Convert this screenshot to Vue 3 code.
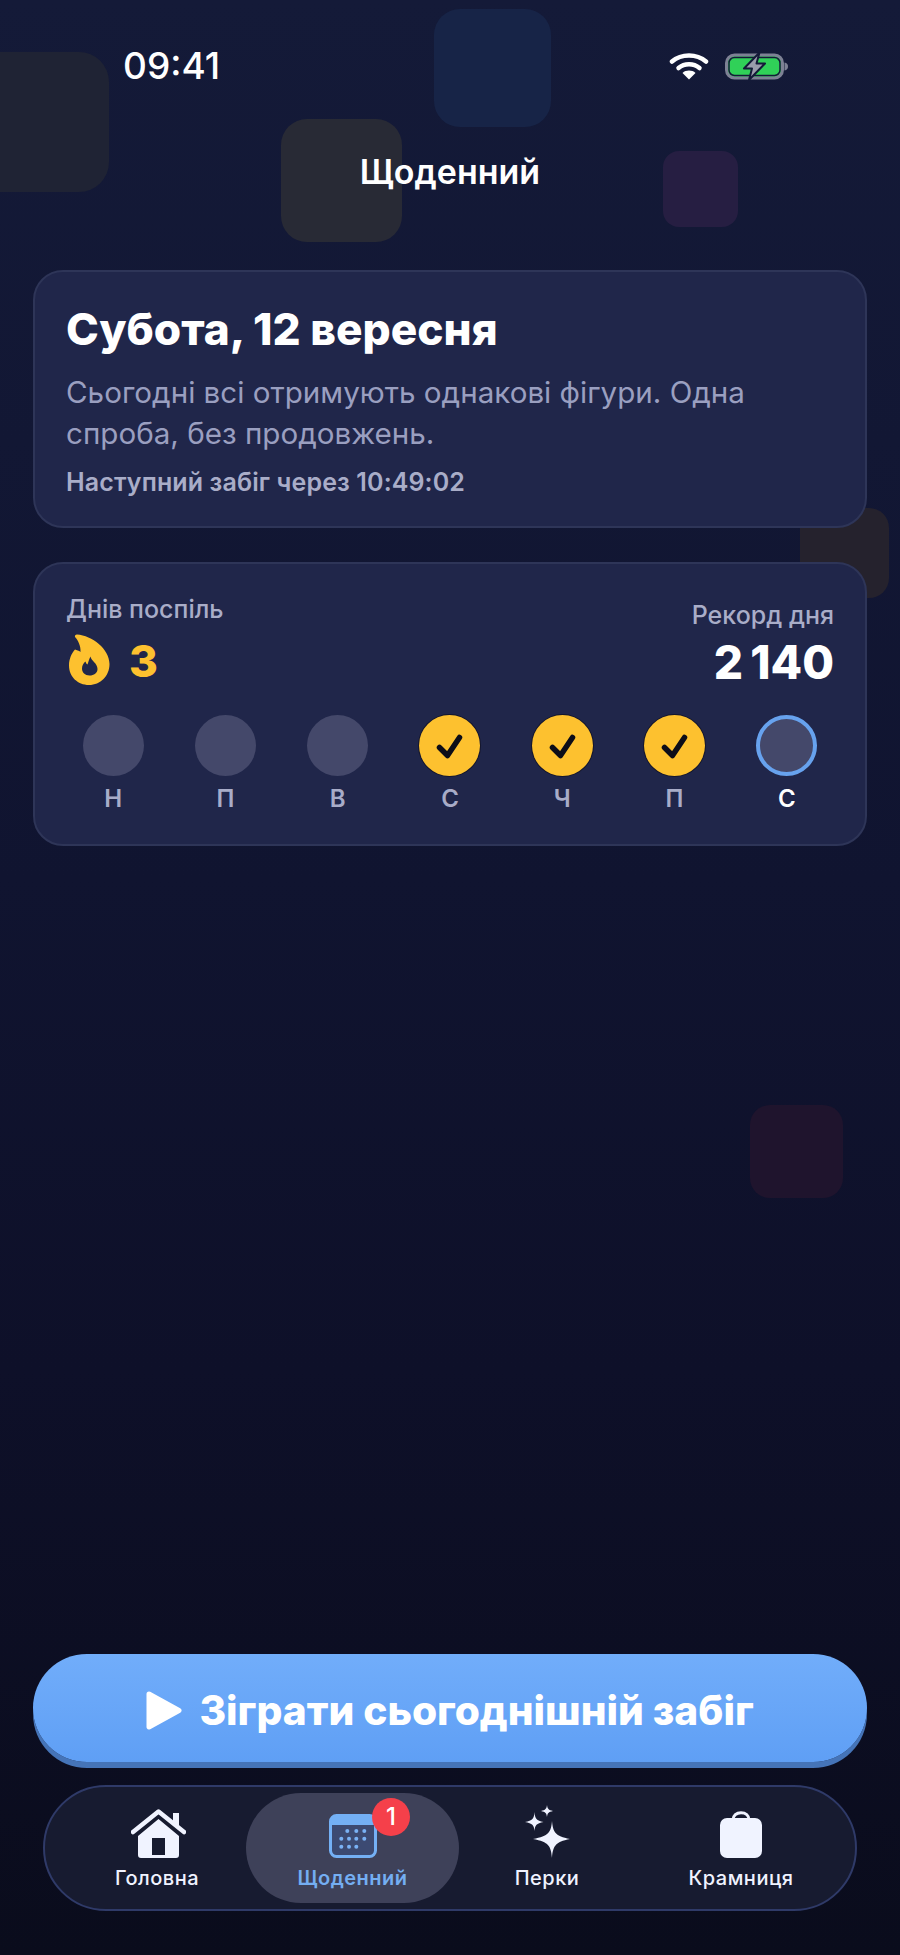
<template>
  <div class="screen">
    <!-- background shapes -->
    <div
      v-for="(b, i) in blocks"
      :key="i"
      class="block"
      :style="{ left: b.x + 'px', top: b.y + 'px', width: b.w + 'px', height: b.h + 'px', background: b.c, borderRadius: b.r + 'px' }"
    ></div>

    <div class="status">
      <span class="time">09:41</span>
      <div class="status-icons">
        <svg width="40" height="28" viewBox="0 0 40 28">
          <path d="M3 9.500C12.500 1.500 27.500 1.500 37 9.500" class="wifi" />
          <path d="M9.500 16C15.500 11 24.500 11 30.500 16" class="wifi" />
          <path d="M20 27.500L13.500 21C17 17.800 23 17.800 26.500 21Z" fill="#fff" />
        </svg>
        <svg width="63" height="28" viewBox="0 0 63 28">
          <rect x="1.500" y="3" width="56" height="23" rx="8" fill="#30d158" stroke="#7d8194" stroke-width="3" />
          <rect x="4" y="5.500" width="51" height="18" rx="5.500" fill="none" stroke="#141a38" stroke-width="1.500" />
          <path d="M59.500 10.500C62 11 63 12.500 63 14.500C63 16.500 62 18 59.500 18.500Z" fill="#7d8194" />
          <path d="M34.500 0.500L19 16.500H27L24 28L40 11.500H31.500Z" fill="#9a9dac" stroke="#141a38" stroke-width="2" stroke-linejoin="round" />
        </svg>
      </div>
    </div>

    <h1 class="title">Щоденний</h1>

    <section class="card intro">
      <h2>Субота, 12 вересня</h2>
      <p class="desc">Сьогодні всі отримують однакові фігури. Одна спроба, без продовжень.</p>
      <p class="next">Наступний забіг через 10:49:02</p>
    </section>

    <section class="card streak">
      <div class="streak-top">
        <div>
          <div class="label">Днів поспіль</div>
          <div class="count">
            <svg width="41" height="51" viewBox="0 0 41 51">
              <path d="M8 0.500C23 1.500 40.500 15 40.500 30C40.500 42 31.500 51 20 51C8.500 51 0 42.500 0 31.500C0 25 2.500 19.500 6 15.500C7.500 16 10 16.500 11.500 18C12 12 9 6 6 3C5.500 1.500 6.500 0.500 8 0.500Z" fill="#fdc12f" />
              <path d="M21.500 22.500C22 27 28.500 29 28.500 35C28.500 39 25 41.500 20.500 41.500C16 41.500 13 38.500 13 34.500C13 31.500 14.500 29 16.500 27.500C17 29 17.500 30 18.500 30.500C19.500 28 20 25 21.500 22.500Z" fill="#20264a" />
            </svg>
            <span>3</span>
          </div>
        </div>
        <div class="record">
          <div class="label">Рекорд дня</div>
          <div class="score">2 140</div>
        </div>
      </div>
      <div class="week">
        <div v-for="(d, i) in days" :key="i" class="day" :class="{ today: d.today }">
          <span class="dot" :class="{ done: d.done }">
            <svg v-if="d.done" width="61" height="61" viewBox="0 0 61 61">
              <path d="M20.500 32.500L28.500 40.500L40.500 22.500" fill="none" stroke="#0c0d18" stroke-width="5.500" stroke-linecap="round" stroke-linejoin="round" />
            </svg>
          </span>
          <span class="day-name">{{ d.name }}</span>
        </div>
      </div>
    </section>

    <div class="spacer"></div>

    <button class="play">
      <svg width="36" height="39" viewBox="0 0 36 39">
        <path d="M3 3L33 19.500L3 36Z" fill="#fff" stroke="#fff" stroke-width="5" stroke-linejoin="round" />
      </svg>
      <span>Зіграти сьогоднішній забіг</span>
    </button>

    <nav class="tabs">
      <div class="tab">
        <svg class="home" width="55" height="49" viewBox="0 0 55 49">
          <path d="M42 4H48V16H42Z" fill="#f0f3ff" />
          <path d="M2 23L27.500 2.500L53 23" fill="none" stroke="#f0f3ff" stroke-width="4.500" stroke-linecap="round" stroke-linejoin="round" />
          <path fill-rule="evenodd" d="M27.500 10L48 27V46C48 48 47 49 45 49H10C8 49 7 48 7 46V27ZM21 29V46H34V29Z" fill="#f0f3ff" />
        </svg>
        <span>Головна</span>
      </div>
      <div class="tab active">
        <svg class="cal" width="48" height="44" viewBox="0 0 48 44">
          <rect x="1.500" y="1.500" width="45" height="41" rx="6" fill="#3c4a72" stroke="#74b0f5" stroke-width="3" />
          <path d="M1.500 11V7.500C1.500 4 4 1.500 7.500 1.500H40.500C44 1.500 46.500 4 46.500 7.500V11Z" fill="#74b0f5" />
          <g fill="#7ab2f5">
            <circle v-for="(p, i) in calDots" :key="i" :cx="p[0]" :cy="p[1]" r="2" />
          </g>
        </svg>
        <span class="badge">1</span>
        <span>Щоденний</span>
      </div>
      <div class="tab">
        <svg width="46" height="53" viewBox="0 0 46 53">
          <path d="M28 16C29 27 31 31 46 34C31 37 29 41 28 53C27 41 25 37 9 34C25 31 27 27 28 16Z" fill="#f0f3ff" />
          <path d="M10.500 7C11 14 12.500 15.500 19.500 17C12.500 18.500 11 20 10.500 26C10 20 8.500 18.500 1 17C8.500 15.500 10 14 10.500 7Z" fill="#f0f3ff" />
          <path d="M23 0C23.500 3.800 24.500 5 29 6C24.500 7 23.500 8 23 12C22.500 8 21.500 7 17 6C21.500 5 22.500 3.800 23 0Z" fill="#f0f3ff" />
        </svg>
        <span>Перки</span>
      </div>
      <div class="tab">
        <svg width="42" height="47" viewBox="0 0 42 47">
          <path d="M13 9C13 4.500 16.500 1.800 21 1.800C25.500 1.800 29 4.500 29 9" fill="none" stroke="#f0f3ff" stroke-width="3" />
          <rect x="0" y="7" width="42" height="40" rx="7" fill="#f0f3ff" />
        </svg>
        <span>Крамниця</span>
      </div>
    </nav>
  </div>
</template>

<script setup>
const blocks = [
  { x: -30, y: 52, w: 139, h: 140, c: '#1f2334', r: 30 },
  { x: 434, y: 9, w: 117, h: 118, c: '#172447', r: 26 },
  { x: 281, y: 119, w: 121, h: 123, c: '#282a35', r: 26 },
  { x: 663, y: 151, w: 75, h: 76, c: '#261e42', r: 16 },
  { x: 800, y: 508, w: 89, h: 90, c: '#25222d', r: 20 },
  { x: 750, y: 1105, w: 93, h: 93, c: '#1f142d', r: 20 }
]

const days = [
  { name: 'Н' },
  { name: 'П' },
  { name: 'В' },
  { name: 'С', done: true },
  { name: 'Ч', done: true },
  { name: 'П', done: true },
  { name: 'С', today: true }
]

const calDots = [
  [18.3, 17], [27.3, 17], [35.3, 17],
  [12.3, 24.7], [20, 24.7], [27.3, 24.7], [35.3, 24.7],
  [12.3, 32.7], [20, 32.7], [27.3, 32.7]
]
</script>

<style>
body {
  background: #0b0d1e;
}
</style>

<style scoped>
.screen {
  position: relative;
  width: 900px;
  height: 1955px;
  overflow: hidden;
  display: flex;
  flex-direction: column;
  background: linear-gradient(180deg, #141a38 0%, #101430 45%, #0e1029 70%, #0a0c1c 100%);
  font-family: Inter, "Noto Sans", sans-serif;
  color: #fff;
}

.block {
  position: absolute;
}

.status,
.title,
.card,
.play,
.tabs {
  position: relative;
}

.status {
  display: flex;
  justify-content: space-between;
  align-items: center;
  height: 28px;
  margin-top: 52px;
  padding: 0 112px 0 123px;
}

.time {
  font-size: 37px;
  font-weight: 500;
  line-height: 28px;
}

.status-icons {
  display: flex;
  align-items: center;
  gap: 16px;
}

.wifi {
  fill: none;
  stroke: #fff;
  stroke-width: 4.5;
  stroke-linecap: round;
}

.title {
  margin: 70px 0 0;
  font-size: 34px;
  font-weight: 600;
  line-height: 44px;
  text-align: center;
}

.card {
  margin: 0 33px;
  padding: 0 31px;
  box-sizing: border-box;
  background: #20264a;
  border: 2px solid #2e3558;
  border-radius: 30px;
}

.intro {
  height: 258px;
  margin-top: 76px;
  padding-top: 29px;
}

.intro h2 {
  margin: 0;
  font-size: 44.2px;
  font-weight: 800;
  line-height: 56px;
}

.desc {
  margin: 15px 0 0;
  font-size: 29.6px;
  line-height: 41px;
  color: #9a9fc0;
}

.next {
  margin: 13px 0 0;
  font-size: 25px;
  font-weight: 600;
  line-height: 30px;
  letter-spacing: 0.12px;
  color: #a9adc8;
}

.streak {
  height: 284px;
  margin-top: 34px;
  padding-top: 30px;
}

.streak-top {
  display: flex;
  justify-content: space-between;
}

.label {
  font-size: 25px;
  font-weight: 500;
  line-height: 30px;
  color: #a9adc8;
}

.count {
  display: flex;
  align-items: center;
  gap: 19px;
  margin: 8.5px 0 0 3px;
  font-size: 44px;
  font-weight: 800;
  color: #fdc12f;
}

.count span {
  position: relative;
  top: 1px;
}

.record {
  padding-top: 6px;
  text-align: right;
}

.score {
  margin-top: 5px;
  font-size: 46px;
  font-weight: 800;
  line-height: 55px;
  word-spacing: -3px;
}

.week {
  display: grid;
  grid-template-columns: repeat(7, 1fr);
  margin: 24.5px -9px 0;
}

.day {
  display: flex;
  flex-direction: column;
  align-items: center;
}

.dot {
  width: 61px;
  height: 61px;
  box-sizing: border-box;
  border-radius: 50%;
  background: #44486a;
}

.dot.done {
  background: #fdc12f;
  box-shadow: 0 0 0 1px #14162c;
}

.today .dot {
  border: 4px solid #67a2ee;
}

.day-name {
  margin-top: 9px;
  font-size: 24px;
  font-weight: 600;
  line-height: 28px;
  color: #a8acc8;
}

.today .day-name {
  color: #fff;
}

.spacer {
  flex: 1;
}

.play {
  display: flex;
  align-items: center;
  justify-content: center;
  gap: 17px;
  box-sizing: border-box;
  height: 108px;
  margin: 0 33px;
  padding: 4px 0 0;
  border: none;
  border-radius: 54px;
  background: linear-gradient(180deg, #71adfa 0%, #5f9ff5 100%);
  box-shadow: 0 6px 0 #4574b8;
  font-family: inherit;
  font-size: 40.7px;
  font-weight: 800;
  color: #fff;
}

.tabs {
  display: grid;
  grid-template-columns: 178px 213px 176px 212px;
  align-items: stretch;
  box-sizing: border-box;
  height: 126px;
  margin: 23px 43px 44px;
  padding: 6px 0 6px 23px;
  background: #171b30;
  border: 2px solid #2f3a68;
  border-radius: 63px;
}

.tab {
  position: relative;
  display: flex;
  flex-direction: column;
  align-items: center;
  justify-content: flex-end;
  padding-bottom: 13px;
  font-size: 20px;
  font-weight: 500;
  line-height: 24px;
  letter-spacing: 0.5px;
  color: #f0f3ff;
}

.tab svg {
  margin-bottom: 8px;
}

.tab .home {
  margin-left: 3px;
}

.active {
  border-radius: 56px;
  background: #3e4159;
  font-weight: 600;
  color: #74aef2;
}

.badge {
  position: absolute;
  top: 5px;
  left: 126px;
  width: 38px;
  height: 38px;
  border-radius: 50%;
  background: #f5404a;
  font-size: 24px;
  font-weight: 500;
  line-height: 38px;
  letter-spacing: 0;
  text-align: center;
  color: #fff;
}
</style>
